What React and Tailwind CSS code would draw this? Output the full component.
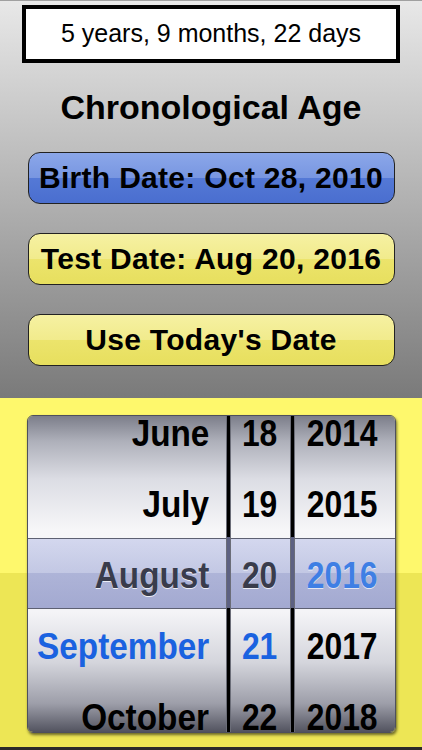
const months = ["June", "July", "August", "September", "October"];
const days = ["18", "19", "20", "21", "22"];
const years = ["2014", "2015", "2016", "2017", "2018"];

const wheelBg =
  "bg-[linear-gradient(to_bottom,#7c7e8a_0%,#aeb0ba_8%,#dcdde4_20%,#f6f6f8_36%,#f4f4f7_62%,#d4d5dc_78%,#9d9ea9_91%,#52535f_100%)]";

function rowColor(i, col) {
  if (i === 2) {
    return col === "year"
      ? "text-[#3f7fe4] [text-shadow:0_1px_0_rgba(255,255,255,0.7)]"
      : "text-[#393c4c] [text-shadow:0_1px_0_rgba(255,255,255,0.8)]";
  }
  if (i === 3 && col !== "year") return "text-[#1a62e0]";
  return "text-black";
}

function Wheel({ items, col, className }) {
  const align =
    col === "month"
      ? "justify-end pr-[17px]"
      : col === "year"
      ? "justify-center pr-[6px]"
      : "justify-center pr-[2px]";
  const shape =
    col === "month" ? "origin-right scale-x-[0.9]" : "origin-center scale-x-[0.86]";
  return (
    <div className={`${wheelBg} ${className}`}>
      <div className="mt-[-18px]">
        {items.map((t, i) => (
          <div key={t} className={`h-[71px] flex items-center ${align}`}>
            <span
              className={`relative z-20 inline-block ${shape} text-[37px] font-bold leading-none ${rowColor(i, col)}`}
            >
              {t}
            </span>
          </div>
        ))}
      </div>
    </div>
  );
}

function Separator() {
  return (
    <div className="relative z-20 w-[5px] bg-black border-x border-[#6b6d78]">
      <div className="absolute left-0 right-0 top-[121px] h-[71px] bg-[#5d6182]" />
    </div>
  );
}

function GlossButton({ children, color }) {
  const bg =
    color === "blue"
      ? "bg-[linear-gradient(to_bottom,#8ba7e9_0%,#7896e1_50%,#5479d6_50%,#4a6ecf_100%)]"
      : "bg-[linear-gradient(to_bottom,#f6f1a2_0%,#f1eb8c_50%,#ece46c_50%,#e7df5e_100%)]";
  return (
    <button
      className={`w-[367px] h-[52px] rounded-[12px] border-[1.5px] border-[#222] ${bg} flex items-center justify-center text-[30px] font-bold tracking-[0.3px] text-black leading-none`}
    >
      {children}
    </button>
  );
}

export default function App() {
  return (
    <div
      className="w-[422px] h-[750px] overflow-hidden"
      style={{ fontFamily: '"Liberation Sans", Arial, sans-serif' }}
    >
      <div className="h-[398px] flex flex-col items-center border-t border-[#a0a0a0] bg-[linear-gradient(to_bottom,#e8e8e8,#7a7a7a)]">
        <div className="mt-[4px] w-[378px] h-[58px] border-[4px] border-black bg-white flex items-center justify-center text-[25px] text-black">
          5 years, 9 months, 22 days
        </div>
        <h1 className="mt-[27px] h-[34px] flex items-center text-[34px] font-bold leading-none text-black">
          Chronological Age
        </h1>
        <div className="mt-[28px]">
          <GlossButton color="blue">Birth Date: Oct 28, 2010</GlossButton>
        </div>
        <div className="mt-[29px]">
          <GlossButton color="yellow">Test Date: Aug 20, 2016</GlossButton>
        </div>
        <div className="mt-[29px]">
          <GlossButton color="yellow">Use Today's Date</GlossButton>
        </div>
      </div>

      <div className="h-[352px] pt-[17px] pl-[27px] border-b-[3px] border-[#2a2a2a] bg-[linear-gradient(to_bottom,#fef86c_0px,#fef86c_175px,#ede655_175px,#ede655_100%)]">
        <div className="relative w-[369px] h-[318px] flex overflow-hidden rounded-[6px] border border-[#4e505c] shadow-[1px_2px_3px_rgba(0,0,0,0.55)]">
          <Wheel items={months} col="month" className="w-[198px]" />
          <Separator />
          <Wheel items={days} col="day" className="w-[59px]" />
          <Separator />
          <Wheel items={years} col="year" className="flex-1" />
          <div className="absolute left-0 right-0 top-[122px] h-[71px] z-10 border-y border-[#5d6072] bg-[linear-gradient(to_bottom,rgba(200,205,235,0.75)_0%,rgba(175,182,220,0.72)_50%,rgba(150,158,205,0.75)_50%,rgba(140,148,198,0.78)_100%)]" />
        </div>
      </div>
    </div>
  );
}
